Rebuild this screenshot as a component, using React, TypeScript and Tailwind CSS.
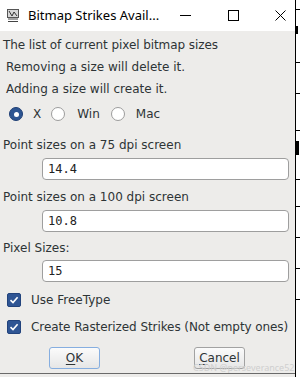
import React from "react";

const Radio = ({ checked }: { checked?: boolean }) =>
  checked ? (
    <span className="flex h-[14px] w-[14px] shrink-0 items-center justify-center rounded-full border border-[#1f3f75] bg-[#2d5592]">
      <span className="h-[5px] w-[5px] rounded-full bg-white" />
    </span>
  ) : (
    <span className="block h-[14px] w-[14px] shrink-0 rounded-full border border-[#9c9c9c] bg-white" />
  );

const Check = () => (
  <span className="flex h-[14px] w-[14px] items-center justify-center rounded-[2px] border border-[#22437c] bg-[#2f5594]">
    <svg width="10" height="10" viewBox="0 0 10 10">
      <path d="M1.5 5.2 L4 7.6 L8.6 2.2" fill="none" stroke="white" strokeWidth="1.6" />
    </svg>
  </span>
);

const Field = ({ value, mt }: { value: string; mt: string }) => (
  <div className={`ml-[42px] h-[22px] w-[247px] rounded-[4px] border border-[#9e9e9e] bg-white pl-[5px] flex items-center text-[12px] text-[#222] font-['DejaVu_Sans_Mono',monospace] ${mt}`}>
    {value}
  </div>
);

export default function App() {
  return (
    <div className="flex h-[377px] w-[300px] overflow-hidden bg-white font-['DejaVu_Sans',sans-serif] text-[12px] text-[#2e3436]">
      <div className="relative flex w-[295px] flex-col bg-[#edecea]">
        <div className="flex h-[31px] items-center bg-white text-[13px] text-black font-['Noto_Sans',sans-serif]">
          <svg className="ml-[7px]" width="12" height="14" viewBox="0 0 12 14">
            <rect x="0.5" y="0.5" width="11" height="8" fill="#d8d8d8" stroke="#555" />
            <path d="M2 2 L5 7 L7 3 L10 7" fill="none" stroke="#333" />
            <path d="M1 10 H11 M1 12.5 H11" stroke="#444" />
          </svg>
          <span className="ml-[9px]">Bitmap Strikes Avail...</span>
          <span className="ml-[21px] h-[1px] w-[11px] bg-black" />
          <span className="ml-[37px] h-[11px] w-[11px] border border-black" />
          <svg className="ml-[36px]" width="11" height="11" viewBox="0 0 11 11">
            <path d="M0.5 0.5 L10.5 10.5 M10.5 0.5 L0.5 10.5" stroke="black" />
          </svg>
        </div>

        <div className="mt-[3px] flex h-[22px] items-center pl-[3px] tracking-[-0.08px]">The list of current pixel bitmap sizes</div>
        <div className="flex h-[22px] items-center pl-[6px]">Removing a size will delete it.</div>
        <div className="flex h-[22px] items-center pl-[6px]">Adding a size will create it.</div>
        <div className="mt-[3px] flex h-[22px] items-center pl-[9px]">
          <Radio checked />
          <span className="ml-[10px]">X</span>
          <span className="ml-[10px]"><Radio /></span>
          <span className="ml-[12px]">Win</span>
          <span className="ml-[11px]"><Radio /></span>
          <span className="ml-[11px]">Mac</span>
        </div>

        <div className="mt-[9px] flex h-[22px] items-center pl-[3px]">Point sizes on a 75 dpi screen</div>
        <Field value="14.4" mt="mt-[2px]" />
        <div className="mt-[6px] flex h-[22px] items-center pl-[3px]">Point sizes on a 100 dpi screen</div>
        <Field value="10.8" mt="mt-[2px]" />
        <div className="mt-[5px] flex h-[22px] items-center pl-[3px]">Pixel Sizes:</div>
        <Field value="15" mt="mt-[1px]" />

        <div className="mt-[7px] flex h-[22px] items-center pl-[7px]">
          <Check />
          <span className="ml-[10px]">Use FreeType</span>
        </div>
        <div className="mt-[5px] flex h-[22px] items-center pl-[7px]">
          <Check />
          <span className="ml-[10px] tracking-[-0.08px]">Create Rasterized Strikes (Not empty ones)</span>
        </div>

        <div className="mt-[9px] flex h-[22px]">
          <button className="ml-[49px] h-[22px] w-[51px] rounded-[3px] border border-[#86aee0] bg-gradient-to-b from-[#fbfbfb] to-[#e6e6e6] text-[12px] text-[#2e3436]">
            <span className="underline underline-offset-2">O</span>K
          </button>
          <button className="ml-[94px] h-[22px] w-[51px] rounded-[3px] border border-[#a2a2a2] bg-gradient-to-b from-[#fbfbfb] to-[#e6e6e6] text-[12px] text-[#2e3436]">
            <span className="underline underline-offset-2">C</span>ancel
          </button>
        </div>
        <div className="mt-[4px] h-[1px] bg-[#6a6a6a]" />

        <span className="absolute left-[193px] top-[362px] whitespace-nowrap text-[9px] leading-[11px] text-[#cfcfcf] font-['Noto_Sans',sans-serif]">CSDN @perseverance52</span>
      </div>

      <div className="flex w-[5px] flex-col border-l border-black bg-white">
        <div className="h-[10px] border-b border-black" />
        <div className="mt-[16px] h-[8px] w-[2px] bg-black" />
        <div className="mt-[28px] h-[1px] bg-black" />
        <div className="mt-[30px] h-[1px] bg-black" />
        <div className="mt-[36px] h-[1px] bg-black" />
        <div className="mt-[10px] h-[14px] w-[3px] bg-black" />
        <div className="mt-[24px] h-[1px] bg-black" />
        <div className="mt-[26px] h-[1px] bg-black" />
        <div className="mt-[30px] h-[1px] bg-black" />
        <div className="mt-[30px] h-[1px] bg-black" />
        <div className="mt-[30px] h-[1px] bg-black" />
      </div>
    </div>
  );
}
